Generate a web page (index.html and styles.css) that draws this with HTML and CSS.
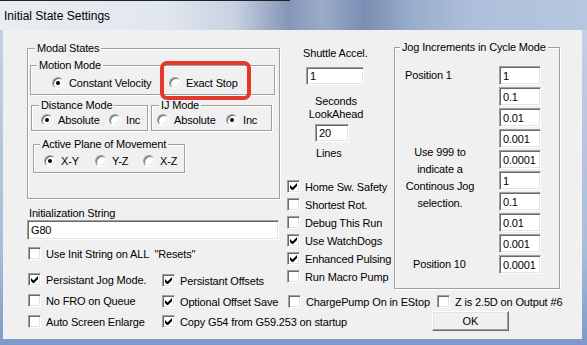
FILE: index.html
```html
<!DOCTYPE html>
<html lang="en">
<head>
  <meta charset="UTF-8" />
  <title>Initial State Settings</title>
  <link rel="stylesheet" href="styles.css">
</head>
<body>
  <div class="window">
    <div class="titlebar">
      <span class="title">Initial State Settings</span>
    </div>
    <div class="frame">
      <div class="client">
        <div class="col-left">
          <div class="group modal">
            <span class="gtitle">Modal States</span>
            <div class="group motion">
              <span class="gtitle">Motion Mode</span>
              <div class="opts">
                <label class="opt w117"><span class="radio on"></span>Constant Velocity</label>
                <label class="opt"><span class="radio"></span>Exact Stop</label>
              </div>
            </div>
            <div class="pair">
              <div class="group dist">
                <span class="gtitle">Distance Mode</span>
                <div class="opts">
                  <label class="opt w68"><span class="radio on"></span>Absolute</label>
                  <label class="opt"><span class="radio"></span>Inc</label>
                </div>
              </div>
              <div class="group ij">
                <span class="gtitle">IJ Mode</span>
                <div class="opts">
                  <label class="opt w69"><span class="radio"></span>Absolute</label>
                  <label class="opt"><span class="radio on"></span>Inc</label>
                </div>
              </div>
            </div>
            <div class="group plane">
              <span class="gtitle">Active Plane of Movement</span>
              <div class="opts">
                <label class="opt w51"><span class="radio on"></span>X-Y</label>
                <label class="opt w48"><span class="radio"></span>Y-Z</label>
                <label class="opt"><span class="radio"></span>X-Z</label>
              </div>
            </div>
          </div>

          <div class="init-label">Initialization String</div>
          <div class="edit init-edit">G80</div>
          <label class="opt use-init"><span class="check"></span>Use Init String on ALL &nbsp;"Resets"</label>

          <div class="checks-grid">
            <label class="opt"><span class="check on"></span>Persistant Jog Mode.</label>
            <label class="opt low"><span class="check on"></span>Persistant Offsets</label>
            <label class="opt"><span class="check"></span>No FRO on Queue</label>
            <label class="opt low"><span class="check on"></span>Optional Offset Save</label>
            <label class="opt"><span class="check"></span>Auto Screen Enlarge</label>
            <label class="opt"><span class="check on"></span>Copy G54 from G59.253 on startup</label>
          </div>
        </div>

        <div class="col-right">
          <div class="upper">
            <div class="col-mid">
              <div class="mid-label accel-label">Shuttle Accel.</div>
              <div class="edit accel">1</div>
              <div class="center-label">Seconds<br>LookAhead</div>
              <div class="edit look">20</div>
              <div class="mid-label lines-label">Lines</div>
              <div class="mid-checks">
                <label class="opt"><span class="check on"></span>Home Sw. Safety</label>
                <label class="opt"><span class="check"></span>Shortest Rot.</label>
                <label class="opt"><span class="check"></span>Debug This Run</label>
                <label class="opt"><span class="check on"></span>Use WatchDogs</label>
                <label class="opt"><span class="check on"></span>Enhanced Pulsing</label>
                <label class="opt"><span class="check"></span>Run Macro Pump</label>
              </div>
            </div>

            <div class="group jog">
              <span class="gtitle">Jog Increments in Cycle Mode</span>
              <div class="jog-body">
                <div class="jog-labels">
                  <div class="pos pos-first">Position 1</div>
                  <div class="jog-note">Use 999 to<br>indicate a<br>Continous Jog<br>selection.</div>
                  <div class="pos pos-last">Position 10</div>
                </div>
                <div class="jog-inputs">
                  <div class="edit">1</div>
                  <div class="edit">0.1</div>
                  <div class="edit">0.01</div>
                  <div class="edit">0.001</div>
                  <div class="edit">0.0001</div>
                  <div class="edit">1</div>
                  <div class="edit">0.1</div>
                  <div class="edit">0.01</div>
                  <div class="edit">0.001</div>
                  <div class="edit">0.0001</div>
                </div>
              </div>
            </div>
          </div>

          <div class="charge-row">
            <label class="opt w149"><span class="check"></span>ChargePump On in EStop</label>
            <label class="opt"><span class="check"></span>Z is 2.5D on Output #6</label>
          </div>
          <div class="ok-row">
            <button class="btn">OK</button>
          </div>
        </div>

        <div class="highlight"></div>
      </div>
    </div>
  </div>
</body>
</html>
```

FILE: styles.css
```css
* {
  box-sizing: border-box;
}
body {
  margin: 0;
  font-family: "Liberation Sans", Arial, sans-serif;
  font-size: 11px;
  letter-spacing: -0.15px;
  color: #000;
  background: #fff;
}
.window {
  width: 587px;
  height: 345px;
  display: flex;
  flex-direction: column;
  overflow: hidden;
}
.titlebar {
  height: 30px;
  flex-shrink: 0;
  display: flex;
  align-items: center;
  padding-left: 4px;
  background:
    linear-gradient(#222, #222) 0 0 / 290px 1px no-repeat,
    linear-gradient(90deg, #e9edf3 0%, #e1e7ef 28%, #c7d1e1 40%, #8596b8 49%, #9aabc9 55%, #7b8db2 62%, #98accb 70%, #aebfdb 80%, #b5c6df 100%);
}
.title {
  font-size: 12px;
  letter-spacing: 0;
  margin-top: 1px;
}
.frame {
  flex: 1;
  display: flex;
  padding: 0 5px 6px 3px;
  background: linear-gradient(180deg, #c4d0e2 0%, #aabcd8 70%, #7d99c9 100%);
}
.client {
  flex: 1;
  position: relative;
  display: flex;
  padding-left: 24px;
  background: #f0f0f0;
}

/* group boxes */
.group {
  border: 1px solid #a0a0a0;
  box-shadow: inset 1px 1px 0 #fff, 1px 1px 0 #fff;
}
.gtitle {
  display: block;
  width: fit-content;
  line-height: 13px;
  margin-top: -7px;
  padding: 0 2px;
  background: #f0f0f0;
  white-space: nowrap;
}
.modal {
  width: 253px;
  height: 151px;
}
.modal > .gtitle {
  margin-left: 7px;
}
.motion {
  width: 245px;
  height: 30px;
  margin: 10px 0 0 2px;
}
.motion .gtitle {
  margin-left: 6px;
}
.motion .opts {
  margin-top: 4px;
  padding-left: 21px;
}
.pair {
  display: flex;
  gap: 3px;
  margin: 10px 0 0 3px;
}
.dist {
  width: 117px;
  height: 26px;
}
.ij {
  width: 121px;
  height: 26px;
}
.dist .gtitle,
.ij .gtitle {
  margin-left: 7px;
}
.dist .opts {
  margin-top: 1px;
  padding-left: 9px;
}
.ij .opts {
  margin-top: 1px;
  padding-left: 5px;
}
.plane {
  width: 152px;
  height: 29px;
  margin: 13px 0 0 5px;
}
.plane .gtitle {
  margin-left: 6px;
}
.plane .opts {
  margin-top: 3px;
  padding-left: 10px;
}

/* options */
.opts {
  display: flex;
}
.opt {
  display: flex;
  align-items: center;
  gap: 5px;
  height: 13px;
  white-space: nowrap;
}
.w117 { width: 117px; }
.w68 { width: 68px; }
.w69 { width: 69px; }
.w51 { width: 51px; }
.w48 { width: 48px; }
.w149 { width: 149px; }

.radio {
  position: relative;
  flex-shrink: 0;
  width: 12px;
  height: 12px;
  border-radius: 50%;
  background: #fff;
  border: 1px solid;
  border-color: #a0a0a0 #fff #fff #a0a0a0;
  box-shadow: inset 1px 1px 0 #696969, inset -1px -1px 0 #e3e3e3;
}
.radio.on::after {
  content: "";
  position: absolute;
  left: 3px;
  top: 3px;
  width: 4px;
  height: 4px;
  border-radius: 50%;
  background: #000;
}
.check {
  flex-shrink: 0;
  display: flex;
  align-items: center;
  justify-content: center;
  width: 13px;
  height: 13px;
  background: #fff;
  border: 1px solid;
  border-color: #a0a0a0 #fff #fff #a0a0a0;
  box-shadow: inset 1px 1px 0 #696969, inset -1px -1px 0 #e3e3e3;
}
.check.on::after {
  content: "";
  width: 7px;
  height: 7px;
  background: #000;
  clip-path: polygon(0 2px, 2.5px 4.5px, 7px 0, 7px 3px, 2.5px 7.5px, 0 5px);
}
.edit {
  display: flex;
  align-items: center;
  padding-left: 3px;
  background: #fff;
  border: 1px solid;
  border-color: #a0a0a0 #fff #fff #a0a0a0;
  box-shadow: inset 1px 1px 0 #696969, inset -1px -1px 0 #e3e3e3;
  white-space: nowrap;
}

/* left column */
.col-left {
  width: 260px;
  flex-shrink: 0;
  padding-top: 18px;
}
.init-label {
  margin: 8px 0 0 2px;
  line-height: 13px;
}
.init-edit {
  width: 252px;
  height: 20px;
}
.use-init {
  margin: 7px 0 0 1px;
}
.checks-grid {
  display: grid;
  grid-template-columns: 134px auto;
  row-gap: 8px;
  margin-top: 13px;
  padding-left: 1px;
}
.checks-grid .low {
  position: relative;
  top: 1px;
}

/* right part */
.col-right {
  flex: 1;
  padding-top: 17px;
}
.upper {
  display: flex;
}
.col-mid {
  width: 107px;
  display: flex;
  flex-direction: column;
  align-items: flex-start;
}
.mid-label {
  line-height: 13px;
}
.accel-label {
  margin-left: 16px;
}
.accel {
  width: 58px;
  height: 18px;
  margin: 7px 0 0 19px;
}
.center-label {
  width: 70px;
  margin: 10px 0 0 14px;
  line-height: 13px;
  text-align: center;
}
.look {
  width: 34px;
  height: 18px;
  margin: 3px 0 0 28px;
}
.lines-label {
  margin: 5px 0 0 29px;
}
.mid-checks {
  display: flex;
  flex-direction: column;
  gap: 5px;
  margin-top: 20px;
}

.jog {
  width: 166px;
  height: 242px;
}
.jog .gtitle {
  margin-left: 5px;
}
.jog-body {
  display: flex;
  margin-top: 12px;
}
.jog-labels {
  width: 104px;
  display: flex;
  flex-direction: column;
}
.pos {
  line-height: 19px;
}
.pos-first {
  padding-left: 10px;
}
.pos-last {
  margin-top: 43px;
  padding-left: 18px;
}
.jog-note {
  width: 90px;
  margin-top: 59px;
  line-height: 17px;
  text-align: center;
}
.jog-inputs {
  display: flex;
  flex-direction: column;
  gap: 2px;
}
.jog-inputs .edit {
  width: 42px;
  height: 19px;
}

.charge-row {
  display: flex;
  margin: 6px 0 0 1px;
}
.ok-row {
  margin: 3px 0 0 145px;
}
.btn {
  width: 77px;
  height: 20px;
  padding: 0;
  font: inherit;
  color: #000;
  background: #f0f0f0;
  border: 1px solid;
  border-color: #fff #696969 #696969 #fff;
  box-shadow: inset -1px -1px 0 #a0a0a0, inset 1px 1px 0 #e3e3e3;
}

/* red annotation box drawn over the dialog */
.highlight {
  position: absolute;
  left: 157px;
  top: 31px;
  width: 91px;
  height: 39px;
  border: 4px solid #e2392c;
  border-radius: 7px;
}
```
